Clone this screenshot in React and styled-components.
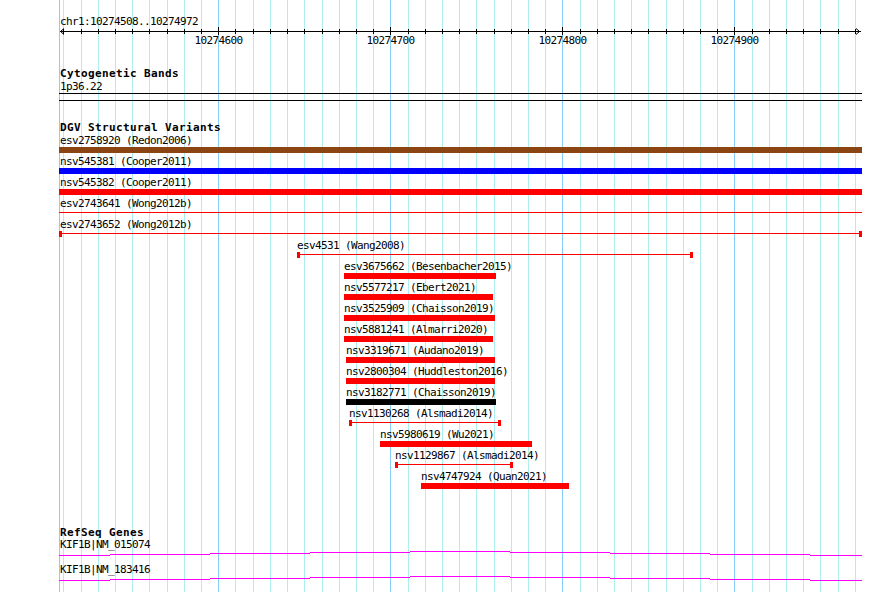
import React from 'react';
import styled, { createGlobalStyle, css } from 'styled-components';

// view: chr1:10274508..10274972, 800px wide starting at x=60
const START = 10274508;
const END = 10274972;
const SCALE = 1.7204;
const PANEL_LEFT = 59;
const toX = bp => Math.round(60 + (bp - START) * SCALE);

const GlobalStyle = createGlobalStyle`
  body {
    margin: 0;
    background: #fff;
  }
`;

const Canvas = styled.div`
  position: relative;
  width: 890px;
  height: 592px;
  overflow: hidden;
  background: #fff;
  color: #000;
  font-family: "DejaVu Sans Mono", "Liberation Mono", monospace;
  font-size: 11px;
  line-height: 13px;
  letter-spacing: -0.62px;
`;

const Grid = styled.svg`
  position: absolute;
  left: 0;
  top: 0;
  z-index: 0;
`;

const Panel = styled.div`
  position: relative;
  z-index: 1;
  margin-left: ${PANEL_LEFT}px;
  width: 803px;
`;

const Ruler = styled.div`
  padding-top: 15px;
`;

const Text = styled.div`
  height: 13px;
  white-space: nowrap;
  padding-left: 1px;
`;

const Axis = styled.svg`
  display: block;
  overflow: visible;
`;

const TickRow = styled.div`
  position: relative;
  height: 13px;
`;

const TickLabel = styled.span`
  position: absolute;
  top: 0;
  transform: translateX(-50%);
  white-space: nowrap;
`;

const Track = styled.section`
  margin-top: ${p => p.$gap}px;
`;

const TrackTitle = styled.div`
  height: 13px;
  padding-left: 1px;
  font-weight: bold;
  letter-spacing: 0.38px;
  white-space: nowrap;
`;

const Band = styled.div`
  height: 6px;
  border-top: 1px solid #000;
  border-bottom: 1px solid #000;
`;

const FeatureRow = styled.div`
  height: 21px;
`;

const FeatureLabel = styled.div`
  height: 13px;
  white-space: nowrap;
`;

const Glyph = styled.div`
  position: relative;
  height: 6px;
  background: ${p => (p.$kind === 'line'
    ? `linear-gradient(${p.$color}, ${p.$color}) 0 2px / 100% 1px no-repeat`
    : p.$color)};
  ${p => p.$caps && css`
    &::before,
    &::after {
      content: '';
      position: absolute;
      top: 0;
      width: 3px;
      height: 6px;
      background: ${p.$color};
    }
    &::before { left: 0; }
    &::after { right: 0; }
  `}
`;

const GeneList = styled.div`
  margin-top: -1px;
`;

const GeneRow = styled.div`
  height: 25px;
`;

const GeneLine = styled.svg`
  display: block;
`;

const RED = '#ff0000';

const variants = [
  { id: 'esv2758920', study: 'Redon2006', x1: 59, x2: 861, color: '#8b4513' },
  { id: 'nsv545381', study: 'Cooper2011', x1: 59, x2: 861, color: '#0000ff' },
  { id: 'nsv545382', study: 'Cooper2011', x1: 59, x2: 861 },
  { id: 'esv2743641', study: 'Wong2012b', x1: 59, x2: 861, kind: 'line' },
  { id: 'esv2743652', study: 'Wong2012b', x1: 59, x2: 861, kind: 'line', caps: true },
  { id: 'esv4531', study: 'Wang2008', x1: 297, x2: 692, kind: 'line', caps: true },
  { id: 'esv3675662', study: 'Besenbacher2015', x1: 344, x2: 495 },
  { id: 'nsv5577217', study: 'Ebert2021', x1: 344, x2: 492 },
  { id: 'nsv3525909', study: 'Chaisson2019', x1: 344, x2: 494 },
  { id: 'nsv5881241', study: 'Almarri2020', x1: 344, x2: 492 },
  { id: 'nsv3319671', study: 'Audano2019', x1: 346, x2: 494 },
  { id: 'nsv2800304', study: 'Huddleston2016', x1: 346, x2: 494 },
  { id: 'nsv3182771', study: 'Chaisson2019', x1: 346, x2: 495, color: '#000000' },
  { id: 'nsv1130268', study: 'Alsmadi2014', x1: 349, x2: 500, kind: 'line', caps: true },
  { id: 'nsv5980619', study: 'Wu2021', x1: 380, x2: 531 },
  { id: 'nsv1129867', study: 'Alsmadi2014', x1: 395, x2: 512, kind: 'line', caps: true },
  { id: 'nsv4747924', study: 'Quan2021', x1: 421, x2: 568 },
];

const genes = ['KIF1B|NM_015074', 'KIF1B|NM_183416'];

// intron "hat": rises 1px every 100px towards the middle
const hatSteps = [
  [59, 110, 4], [110, 210, 3], [210, 310, 2], [310, 410, 1], [410, 510, 0],
  [510, 610, 1], [610, 710, 2], [710, 810, 3], [810, 862, 4],
];

const ticks = [];
for (let bp = 10274510; bp <= END; bp += 10) ticks.push(bp);

const GridLines = () => (
  <Grid width="890" height="592" shapeRendering="crispEdges">
    <rect x={PANEL_LEFT} y="0" width="1" height="592" fill="#87cefa" />
    {ticks.map(bp => (
      <rect key={bp} x={toX(bp)} y="0" width="1" height="592" fill={bp % 100 === 0 ? '#87cefa' : '#afeeee'} />
    ))}
  </Grid>
);

const RulerAxis = () => (
  <Axis width="803" height="6">
    <g shapeRendering="crispEdges" fill="#000">
      <rect x="1" y="3" width="801" height="1" />
      {ticks.map(bp => (bp % 100 === 0
        ? <rect key={bp} x={toX(bp) - PANEL_LEFT} y="-1" width="1" height="8" />
        : <rect key={bp} x={toX(bp) - PANEL_LEFT} y="1" width="1" height="5" />))}
    </g>
    <polyline points="5,0.5 1.5,3.5 5,6.5" fill="none" stroke="#000" strokeWidth="1" />
    <polyline points="797,0.5 800.5,3.5 797,6.5" fill="none" stroke="#000" strokeWidth="1" />
  </Axis>
);

export default function App() {
  return (
    <>
      <GlobalStyle />
      <Canvas>
        <GridLines />
        <Panel>
          <Ruler>
            <Text>chr1:{START}..{END}</Text>
            <RulerAxis />
            <TickRow>
              {ticks.filter(bp => bp % 100 === 0).map(bp => (
                <TickLabel key={bp} style={{ left: toX(bp) - PANEL_LEFT + 0.5 }}>{bp}</TickLabel>
              ))}
            </TickRow>
          </Ruler>

          <Track $gap={20}>
            <TrackTitle>Cytogenetic Bands</TrackTitle>
            <Text>1p36.22</Text>
            <Band />
          </Track>

          <Track $gap={20}>
            <TrackTitle>DGV Structural Variants</TrackTitle>
            {variants.map(v => (
              <FeatureRow key={v.id}>
                <FeatureLabel style={{ marginLeft: Math.max(v.x1, 60) - PANEL_LEFT }}>
                  {v.id} ({v.study})
                </FeatureLabel>
                <Glyph
                  $kind={v.kind || 'box'}
                  $caps={v.caps}
                  $color={v.color || RED}
                  style={{ marginLeft: v.x1 - PANEL_LEFT, width: v.x2 - v.x1 + 1 }}
                />
              </FeatureRow>
            ))}
          </Track>

          <Track $gap={35}>
            <TrackTitle>RefSeq Genes</TrackTitle>
            <GeneList>
              {genes.map(name => (
                <GeneRow key={name}>
                  <Text>{name}</Text>
                  <GeneLine width="803" height="12" shapeRendering="crispEdges">
                    {hatSteps.map(([a, b, y]) => (
                      <rect key={a} x={a - PANEL_LEFT} y={y} width={b - a} height="1" fill="#ff00ff" />
                    ))}
                  </GeneLine>
                </GeneRow>
              ))}
            </GeneList>
          </Track>
        </Panel>
      </Canvas>
    </>
  );
}
